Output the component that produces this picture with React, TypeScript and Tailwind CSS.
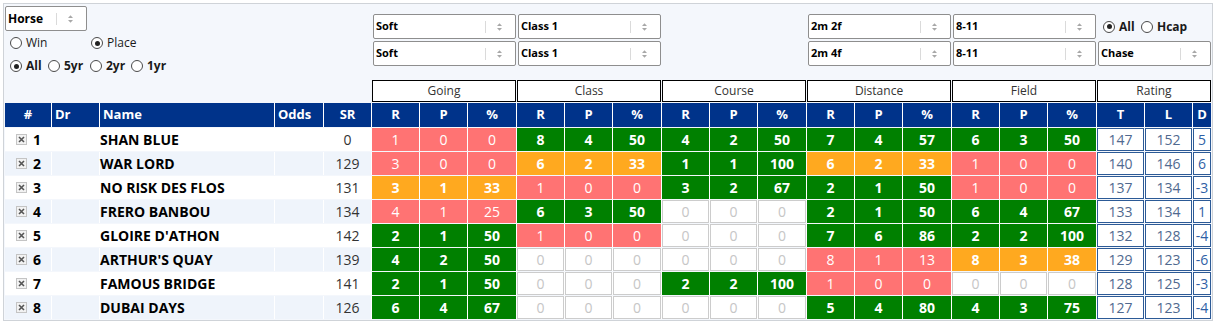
import React from "react";

type Kind = "g" | "o" | "p" | "e";
type Stat = [Kind, number, number, number];

type Row = {
  n: number;
  name: string;
  sr: number;
  stats: Stat[];
  t: number;
  l: number;
  d: number;
};

const rows: Row[] = [
  { n: 1, name: "SHAN BLUE", sr: 0, stats: [["p", 1, 0, 0], ["g", 8, 4, 50], ["g", 4, 2, 50], ["g", 7, 4, 57], ["g", 6, 3, 50]], t: 147, l: 152, d: 5 },
  { n: 2, name: "WAR LORD", sr: 129, stats: [["p", 3, 0, 0], ["o", 6, 2, 33], ["g", 1, 1, 100], ["o", 6, 2, 33], ["p", 1, 0, 0]], t: 140, l: 146, d: 6 },
  { n: 3, name: "NO RISK DES FLOS", sr: 131, stats: [["o", 3, 1, 33], ["p", 1, 0, 0], ["g", 3, 2, 67], ["g", 2, 1, 50], ["p", 1, 0, 0]], t: 137, l: 134, d: -3 },
  { n: 4, name: "FRERO BANBOU", sr: 134, stats: [["p", 4, 1, 25], ["g", 6, 3, 50], ["e", 0, 0, 0], ["g", 2, 1, 50], ["g", 6, 4, 67]], t: 133, l: 134, d: 1 },
  { n: 5, name: "GLOIRE D'ATHON", sr: 142, stats: [["g", 2, 1, 50], ["p", 1, 0, 0], ["e", 0, 0, 0], ["g", 7, 6, 86], ["g", 2, 2, 100]], t: 132, l: 128, d: -4 },
  { n: 6, name: "ARTHUR'S QUAY", sr: 139, stats: [["g", 4, 2, 50], ["e", 0, 0, 0], ["e", 0, 0, 0], ["p", 8, 1, 13], ["o", 8, 3, 38]], t: 129, l: 123, d: -6 },
  { n: 7, name: "FAMOUS BRIDGE", sr: 141, stats: [["g", 2, 1, 50], ["e", 0, 0, 0], ["g", 2, 2, 100], ["p", 1, 0, 0], ["e", 0, 0, 0]], t: 128, l: 125, d: -3 },
  { n: 8, name: "DUBAI DAYS", sr: 126, stats: [["g", 6, 4, 67], ["e", 0, 0, 0], ["e", 0, 0, 0], ["g", 5, 4, 80], ["g", 4, 3, 75]], t: 127, l: 123, d: -4 },
];

const GRID =
  "grid grid-cols-[46px_47px_174px_48px_47px_47px_47px_48px_47px_47px_48px_47px_47px_48px_47px_47px_48px_47px_47px_48px_47px_47px_18px] gap-px";

function Arrows() {
  return (
    <svg width="7" height="10" viewBox="0 0 7 10" className="block">
      <path d="M1 4 L3.5 1.2 L6 4 Z" fill="#a8a8a8" />
      <path d="M1 6 L3.5 8.8 L6 6 Z" fill="#a8a8a8" />
    </svg>
  );
}

function Sel({ label, className = "", big = false }: { label: string; className?: string; big?: boolean }) {
  return (
    <div className={`flex h-[25px] items-center rounded-[2px] border border-[#8e8e8e] bg-white ${className}`}>
      <span className={`pl-[2px] font-bold text-black ${big ? "text-[12px]" : "text-[11px]"}`}>{label}</span>
      <div className="ml-auto h-[12px] w-px bg-[#dadada]" />
      <div className="flex w-[29px] justify-center pr-[2px]">
        <Arrows />
      </div>
    </div>
  );
}

function Radio({ checked, label, bold = false, className = "" }: { checked?: boolean; label: string; bold?: boolean; className?: string }) {
  return (
    <div className={`flex items-center ${className}`}>
      <div className="flex h-[12px] w-[12px] items-center justify-center rounded-full border border-[#4a4a4a] bg-white">
        {checked && <div className="h-[5px] w-[5px] rounded-full bg-[#222]" />}
      </div>
      <span className={`ml-[4px] text-[12px] leading-none text-[#1a1a1a] ${bold ? "font-bold" : ""}`}>{label}</span>
    </div>
  );
}

function StatCell({ kind, v }: { kind: Kind; v: number }) {
  if (kind === "e") {
    return (
      <div className="flex h-[23px] items-center justify-center border border-[#cccccc] bg-white text-[14px] text-[#c6c6c6]">
        0
      </div>
    );
  }
  const cls =
    kind === "g"
      ? "bg-[#008000] font-bold"
      : kind === "o"
      ? "bg-[#ffa91f] font-bold"
      : "bg-[#ff7373]";
  return (
    <div className={`flex h-[23px] items-center justify-center text-[14px] text-white ${cls}`}>{v}</div>
  );
}

function RateCell({ v, d = false }: { v: number; d?: boolean }) {
  return (
    <div
      className={`flex h-[23px] items-center justify-center border border-[#2c5a96] bg-white text-[14px] ${
        d ? "text-[#2f5fa6]" : "text-[#50698f]"
      }`}
    >
      {v}
    </div>
  );
}

function CheckX() {
  return (
    <svg width="11" height="11" viewBox="0 0 11 11" className="block">
      <rect x="0.5" y="0.5" width="10" height="10" fill="#f2f2f2" stroke="#c4c4c4" />
      <path d="M3 3 L8 8 M8 3 L3 8" stroke="#555" strokeWidth="1.6" />
    </svg>
  );
}

function GroupHead({ label }: { label: string }) {
  return (
    <div className="col-span-3 flex h-[22px] items-center justify-center border border-black bg-white text-[12px] text-[#333]">
      {label}
    </div>
  );
}

function H({ children, left = false }: { children: React.ReactNode; left?: boolean }) {
  return (
    <div
      className={`flex h-[24px] items-center bg-[#00338a] text-[13px] font-bold text-white ${
        left ? "pl-[3px]" : "justify-center"
      }`}
    >
      {children}
    </div>
  );
}

export default function App() {
  return (
    <div
      className="h-[326px] w-[1218px] bg-white pl-[3px] pt-[3px]"
      style={{ fontFamily: '"Open Sans", "Liberation Sans", sans-serif' }}
    >
      <div className="w-[1210px] border border-[#cfd3d8] bg-[#f4f7fc] px-px pb-px">
        {/* top controls */}
        <div className={`${GRID} h-[76px]`}>
          <div className="col-span-5 flex flex-col">
            <Sel label="Horse" big className="mt-[2px] w-[82px]" />
            <div className="flex h-[24px] items-center pl-[5px]">
              <Radio label="Win" className="w-[81px]" />
              <Radio label="Place" checked />
            </div>
            <div className="flex h-[22px] items-center pl-[5px]">
              <Radio label="All" checked bold className="w-[38px]" />
              <Radio label="5yr" bold className="w-[42px]" />
              <Radio label="2yr" bold className="w-[41px]" />
              <Radio label="1yr" bold />
            </div>
          </div>
          <div className="col-span-3 flex flex-col gap-[2px] pt-[10px]">
            <Sel label="Soft" className="ml-px w-[143px]" />
            <Sel label="Soft" className="ml-px w-[143px]" />
          </div>
          <div className="col-span-3 flex flex-col gap-[2px] pt-[10px]">
            <Sel label="Class 1" className="ml-px w-[143px]" />
            <Sel label="Class 1" className="ml-px w-[143px]" />
          </div>
          <div className="col-span-3" />
          <div className="col-span-3 flex flex-col gap-[2px] pt-[10px]">
            <Sel label="2m 2f" className="ml-px w-[143px]" />
            <Sel label="2m 4f" className="ml-px w-[143px]" />
          </div>
          <div className="col-span-3 flex flex-col gap-[2px] pt-[10px]">
            <Sel label="8-11" className="ml-px w-[143px]" />
            <Sel label="8-11" className="ml-px w-[143px]" />
          </div>
          <div className="col-span-3 flex flex-col gap-[2px] pt-[10px]">
            <div className="flex h-[25px] items-center pl-[6px]">
              <Radio label="All" checked bold className="w-[38px]" />
              <Radio label="Hcap" bold />
            </div>
            <Sel label="Chase" className="ml-px w-[113px]" />
          </div>
        </div>

        {/* group headers */}
        <div className={GRID}>
          <div className="col-span-5" />
          <GroupHead label="Going" />
          <GroupHead label="Class" />
          <GroupHead label="Course" />
          <GroupHead label="Distance" />
          <GroupHead label="Field" />
          <GroupHead label="Rating" />
        </div>

        {/* column headers */}
        <div className={`${GRID} mt-px bg-white`}>
          <H>#</H>
          <H left>Dr</H>
          <H left>Name</H>
          <H left>Odds</H>
          <H>SR</H>
          {Array.from({ length: 5 }).map((_, i) => (
            <React.Fragment key={i}>
              <H>R</H>
              <H>P</H>
              <H>%</H>
            </React.Fragment>
          ))}
          <H>T</H>
          <H>L</H>
          <H>D</H>
        </div>

        {/* data rows */}
        {rows.map((r, i) => {
          const bg = i % 2 === 1 ? "bg-[#eff4fb]" : "bg-white";
          return (
            <div key={r.n} className={`${GRID} mt-px bg-white`}>
              <div className={`flex h-[23px] items-center pl-[11px] ${bg}`}>
                <CheckX />
                <span className="ml-[6px] text-[14px] font-bold text-black">{r.n}</span>
              </div>
              <div className={`h-[23px] ${bg}`} />
              <div className={`flex h-[23px] items-center text-[14px] font-bold text-black ${bg}`}>{r.name}</div>
              <div className={`h-[23px] ${bg}`} />
              <div className={`flex h-[23px] items-center justify-center text-[14px] text-[#333] ${bg}`}>{r.sr}</div>
              {r.stats.map((s, j) => (
                <React.Fragment key={j}>
                  <StatCell kind={s[0]} v={s[1]} />
                  <StatCell kind={s[0]} v={s[2]} />
                  <StatCell kind={s[0]} v={s[3]} />
                </React.Fragment>
              ))}
              <RateCell v={r.t} />
              <RateCell v={r.l} />
              <RateCell v={r.d} d />
            </div>
          );
        })}
      </div>
    </div>
  );
}
